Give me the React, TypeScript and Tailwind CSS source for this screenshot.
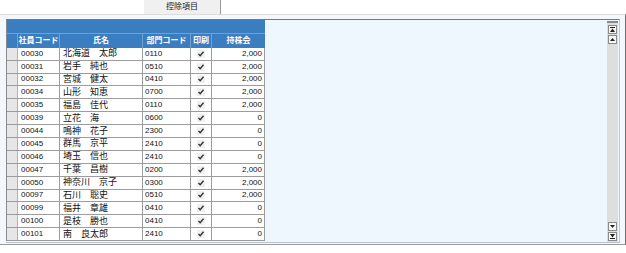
import React from "react";

const rows: [string, string, string, string][] = [
  ["00030", "北海道　太郎", "0110", "2,000"],
  ["00031", "岩手　純也", "0510", "2,000"],
  ["00032", "宮城　健太", "0410", "2,000"],
  ["00034", "山形　知恵", "0700", "2,000"],
  ["00035", "福島　佳代", "0110", "2,000"],
  ["00039", "立花　海", "0600", "0"],
  ["00044", "鳴神　花子", "2300", "0"],
  ["00045", "群馬　京平", "2410", "0"],
  ["00046", "埼玉　信也", "2410", "0"],
  ["00047", "千葉　昌樹", "0200", "2,000"],
  ["00050", "神奈川　京子", "0300", "2,000"],
  ["00097", "石川　聡史", "0510", "2,000"],
  ["00099", "福井　章雄", "0410", "0"],
  ["00100", "是枝　勝也", "0410", "0"],
  ["00101", "南　良太郎", "2410", "0"],
];

const font = { fontFamily: '"Liberation Sans", "Noto Sans CJK JP", sans-serif' };

function Check() {
  return (
    <svg width="8" height="8" viewBox="0 0 8 8">
      <rect x="0" y="0" width="8" height="8" fill="#f0f0f0" />
      <path d="M1.5 4 L3.2 5.8 L6.5 1.8" stroke="#333" strokeWidth="1.4" fill="none" />
    </svg>
  );
}

function ScrollBtn({ kind }: { kind: "top" | "up" | "down" | "bottom" }) {
  return (
    <div className="h-[9px] w-[9px] border border-[#8a8a8a] bg-[#f7f7f7] flex items-center justify-center">
      <svg width="5" height="5" viewBox="0 0 5 5">
        {kind === "top" && (
          <>
            <rect x="0" y="0" width="5" height="1" fill="#222" />
            <path d="M0 5 L2.5 1.5 L5 5 Z" fill="#222" />
          </>
        )}
        {kind === "up" && <path d="M0 4 L2.5 1 L5 4 Z" fill="#222" />}
        {kind === "down" && <path d="M0 1 L2.5 4 L5 1 Z" fill="#222" />}
        {kind === "bottom" && (
          <>
            <path d="M0 0 L2.5 3.5 L5 0 Z" fill="#222" />
            <rect x="0" y="4" width="5" height="1" fill="#222" />
          </>
        )}
      </svg>
    </div>
  );
}

export default function App() {
  return (
    <div className="w-[626px] h-[253px] bg-white overflow-hidden" style={font}>
      {/* tab strip */}
      <div className="h-[14px] flex">
        <div className="ml-[144px] w-[77px] h-[14px] bg-[#f0f0f0] border-r border-[#9a9a9a] flex items-center justify-center text-[8px] leading-none text-[#222]">
          控除項目
        </div>
      </div>
      {/* outer panel */}
      <div className="h-[231px] border-t border-[#dcdcdc] border-r border-r-[#6e6e6e] border-b border-b-[#9a9a9a] bg-[#f4f7fb] pt-[4px] pl-[6px] pr-[3px] pb-[1px]">
        <div className="h-[224px] w-[614px] bg-[#eef6fe] border-t border-[#7a7a7a] border-r border-r-[#c8c8c8] border-b border-b-[#b8c4d0] flex justify-between">
          {/* grid */}
          <div className="w-[259px] h-[221px] border-l border-[#8a8a8a] bg-[#f2f2f2] flex flex-col">
            <div className="h-[14px] bg-[#3b7dc1] border-b border-[#6fa3d6]" />
            <div className="h-[14px] bg-[#3b7dc1] flex text-white font-bold text-[8px] leading-none whitespace-nowrap">
              <div className="w-[11px] border-r border-[#6fa3d6]" />
              <div className="w-[42px] border-r border-[#6fa3d6] flex items-center justify-center">社員コード</div>
              <div className="w-[83px] border-r border-[#6fa3d6] flex items-center justify-center">氏名</div>
              <div className="w-[48px] border-r border-[#6fa3d6] flex items-center justify-center">部門コード</div>
              <div className="w-[21px] border-r border-[#6fa3d6] flex items-center justify-center">印刷</div>
              <div className="w-[53px] flex items-center justify-center">持株会</div>
            </div>
            {rows.map((r) => (
              <div key={r[0]} className="h-[13px] flex text-[#111] leading-none border-b border-[#9c9c9c] whitespace-nowrap">
                <div className="w-[11px] bg-[#e6e6e6] border-r border-[#b0b0b0]" />
                <div className="w-[42px] bg-white border-r border-[#9c9c9c] flex items-center pl-[3px] text-[8px]">{r[0]}</div>
                <div className="w-[83px] bg-white border-r border-[#9c9c9c] flex items-center pl-[3px] text-[9px]">{r[1]}</div>
                <div className="w-[48px] bg-white border-r border-[#9c9c9c] flex items-center pl-[2px] text-[8px]">{r[2]}</div>
                <div className="w-[21px] bg-white border-r border-[#9c9c9c] flex items-center justify-center"><Check /></div>
                <div className="w-[53px] bg-white border-r border-[#9c9c9c] flex items-center justify-end pr-[2px] text-[8px]">{r[3]}</div>
              </div>
            ))}
          </div>
          {/* scrollbar */}
          <div className="w-[11px] h-[221px] mr-[1px] mt-[1px] border-t-2 border-double border-[#8a8a8a] bg-[#dedede] flex flex-col items-center pt-[2px] pb-[1px]">
            <ScrollBtn kind="top" />
            <div className="h-[1px]" />
            <ScrollBtn kind="up" />
            <div className="flex-1" />
            <ScrollBtn kind="down" />
            <div className="h-[1px]" />
            <ScrollBtn kind="bottom" />
          </div>
        </div>
      </div>
    </div>
  );
}
